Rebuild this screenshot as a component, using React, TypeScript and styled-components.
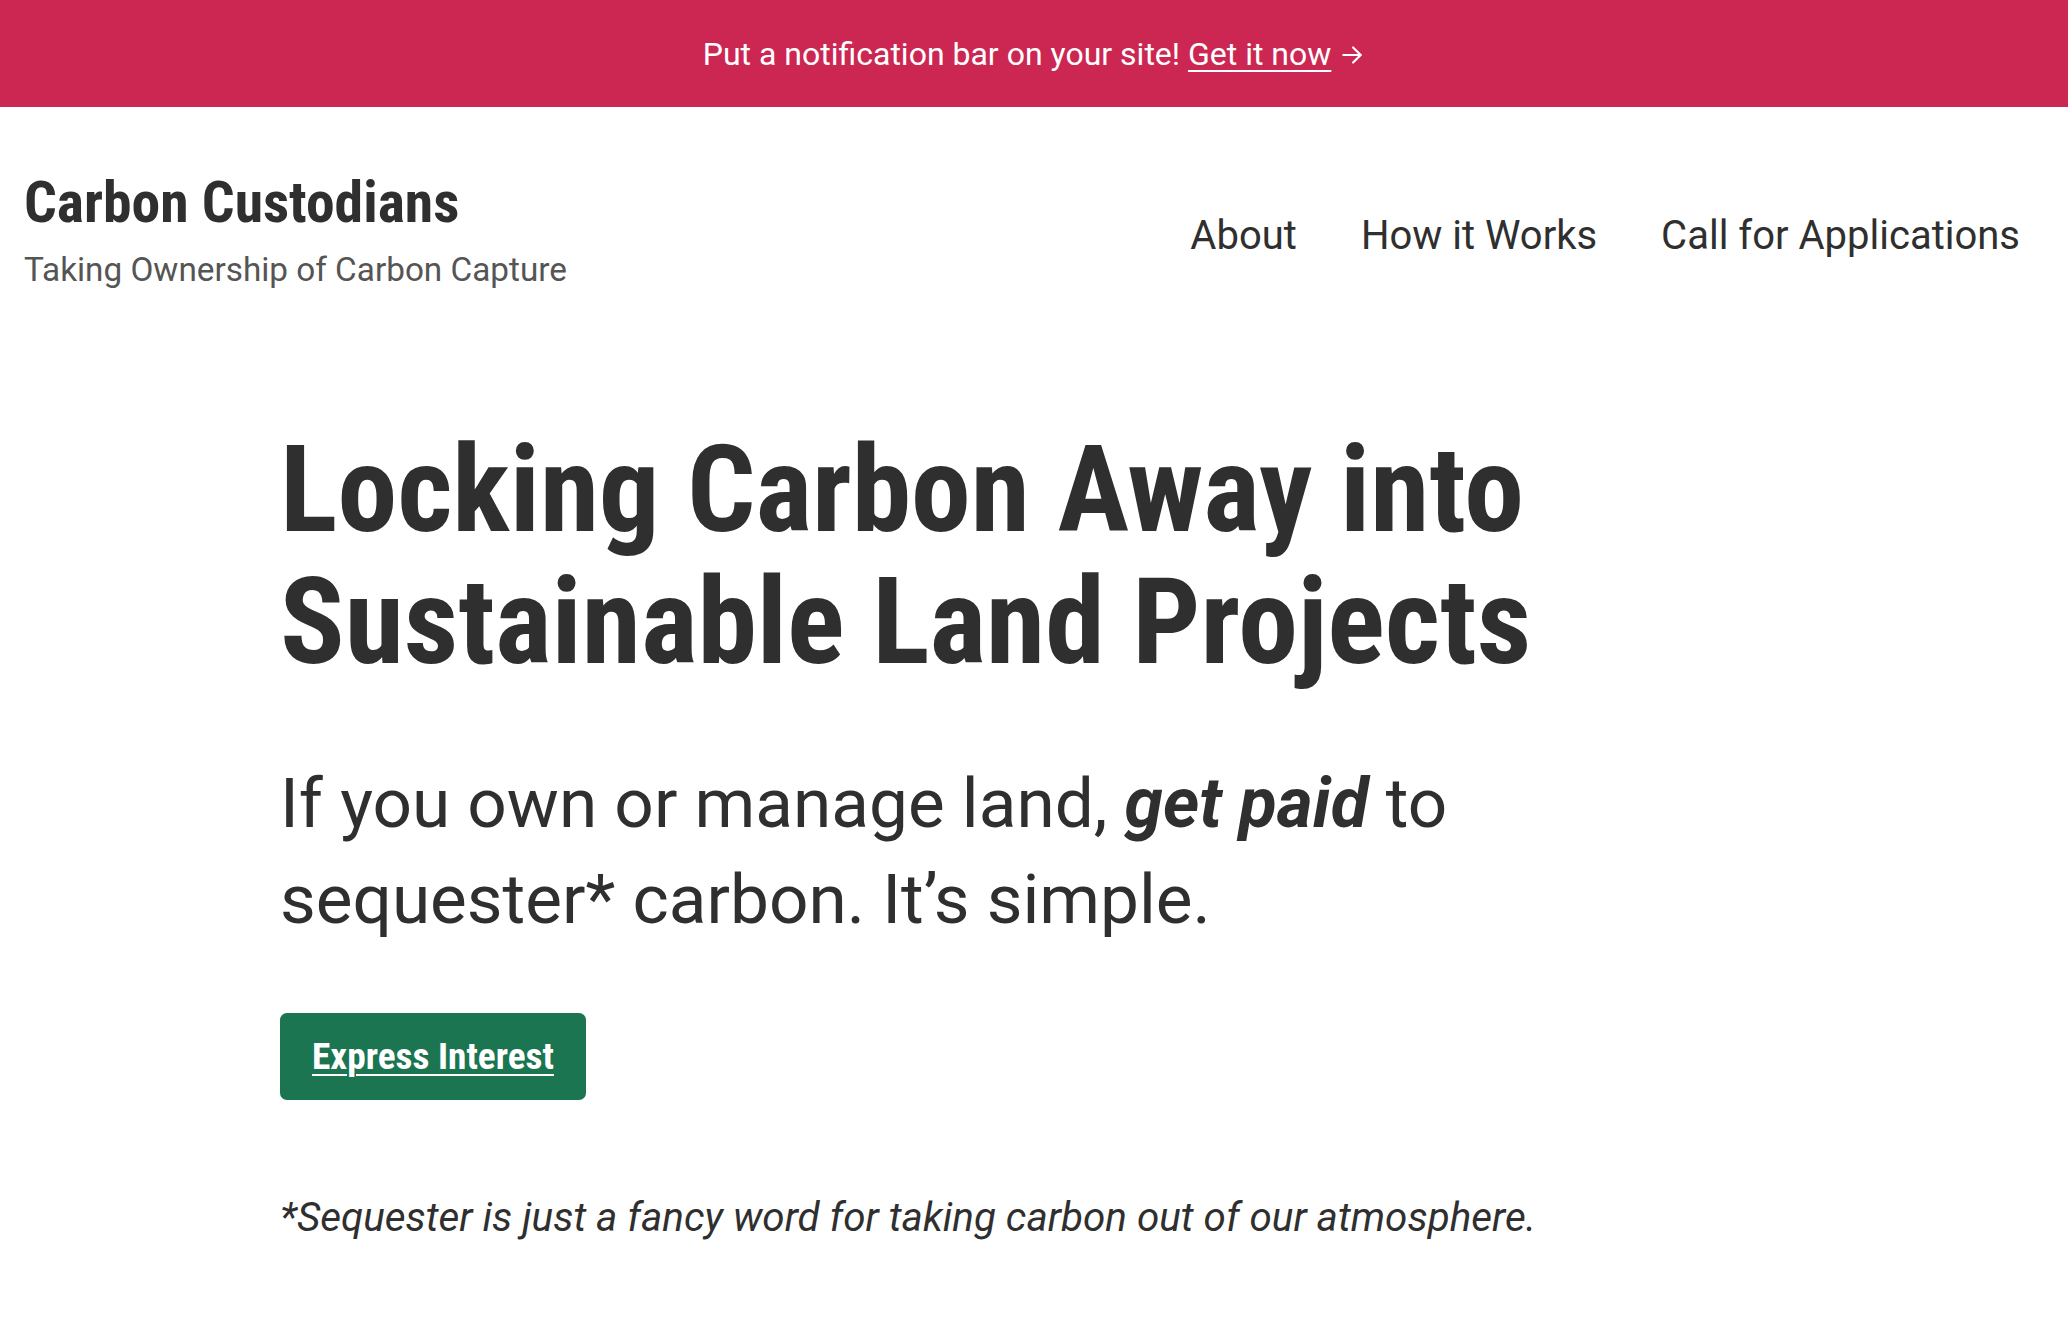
import React from 'react';
import { createGlobalStyle, styled } from 'styled-components';

const GlobalStyle = createGlobalStyle`
  html, body {
    margin: 0;
    padding: 0;
    background: #ffffff;
  }
  body {
    font-family: Roboto, "Liberation Sans", sans-serif;
    color: #2f2f2f;
  }
`;

const CONDENSED = `"Roboto Condensed", "Liberation Sans Narrow", Roboto, sans-serif`;

const navItems = ['About', 'How it Works', 'Call for Applications'];

const Arrow = () => (
  <ArrowIcon viewBox="0 0 24 24" width="26" height="26" fill="none" stroke="currentColor" strokeWidth="2" strokeLinecap="round" strokeLinejoin="round">
    <path d="M4 12h16" />
    <path d="M13 5l7 7-7 7" />
  </ArrowIcon>
);

function App() {
  return (
    <>
      <GlobalStyle />
      <NoticeBar>
        <NoticeText>
          Put a notification bar on your site! <a href="#">Get it now</a> <Arrow />
        </NoticeText>
      </NoticeBar>

      <Header>
        <Brand>
          <SiteTitle>Carbon Custodians</SiteTitle>
          <Tagline>Taking Ownership of Carbon Capture</Tagline>
        </Brand>
        <Nav>
          {navItems.map((item) => (
            <NavLink key={item} href="#">{item}</NavLink>
          ))}
        </Nav>
      </Header>

      <Hero>
        <Heading>
          Locking Carbon Away into
          <br />
          Sustainable Land Projects
        </Heading>
        <Lead>
          If you own or manage land, <strong><em>get paid</em></strong> to
          <br />
          sequester* carbon. It&rsquo;s simple.
        </Lead>
        <Button href="#">Express Interest</Button>
        <Footnote>*Sequester is just a fancy word for taking carbon out of our atmosphere.</Footnote>
      </Hero>
    </>
  );
}

const NoticeBar = styled.div`
  height: 107px;
  background: #cc2752;
  color: #ffffff;
  display: flex;
  align-items: center;
  justify-content: center;
`;

const NoticeText = styled.span`
  font-size: 32px;
  white-space: pre;

  a {
    color: #ffffff;
    text-decoration: underline;
    text-decoration-thickness: 2px;
    text-underline-offset: 5px;
  }
`;

const ArrowIcon = styled.svg`
  vertical-align: -3px;
`;

const Header = styled.header`
  display: flex;
  align-items: center;
  justify-content: space-between;
  padding: 61px 16px 0 24px;
`;

const Brand = styled.div`
  display: flex;
  flex-direction: column;
`;

const SiteTitle = styled.h1`
  margin: 0;
  font-family: ${CONDENSED};
  font-weight: 700;
  font-size: 57.6px;
  line-height: 69px;
  color: #2f2f2f;
`;

const Tagline = styled.p`
  margin: 13px 0 0;
  font-size: 33.3px;
  line-height: 40px;
  color: #555555;
`;

const Nav = styled.nav`
  display: flex;
  margin-top: 12px;
`;

const NavLink = styled.a`
  padding: 0 32px;
  font-size: 40px;
  color: #2f2f2f;
  text-decoration: none;
`;

const Hero = styled.main`
  padding: 134px 280px 0;
  display: flex;
  flex-direction: column;
  align-items: flex-start;
`;

const Heading = styled.h2`
  margin: 0;
  font-family: ${CONDENSED};
  font-weight: 700;
  font-size: 120px;
  line-height: 132px;
  color: #2f2f2f;
`;

const Lead = styled.p`
  margin: 68px 0 0;
  font-size: 69.3px;
  line-height: 96px;
  color: #2f2f2f;

  strong {
    font-weight: 700;
  }
`;

const Button = styled.a`
  margin-top: 65px;
  display: inline-block;
  padding: 21px 32px;
  background: #1b7550;
  border-radius: 7px;
  color: #ffffff;
  font-family: ${CONDENSED};
  font-weight: 700;
  font-size: 37.3px;
  line-height: 45px;
  text-decoration: underline;
  text-decoration-thickness: 2px;
  text-underline-offset: 5px;
`;

const Footnote = styled.p`
  margin: 94px 0 0;
  font-size: 40.4px;
  line-height: 47px;
  font-style: italic;
  color: #2f2f2f;
`;

export default App;
